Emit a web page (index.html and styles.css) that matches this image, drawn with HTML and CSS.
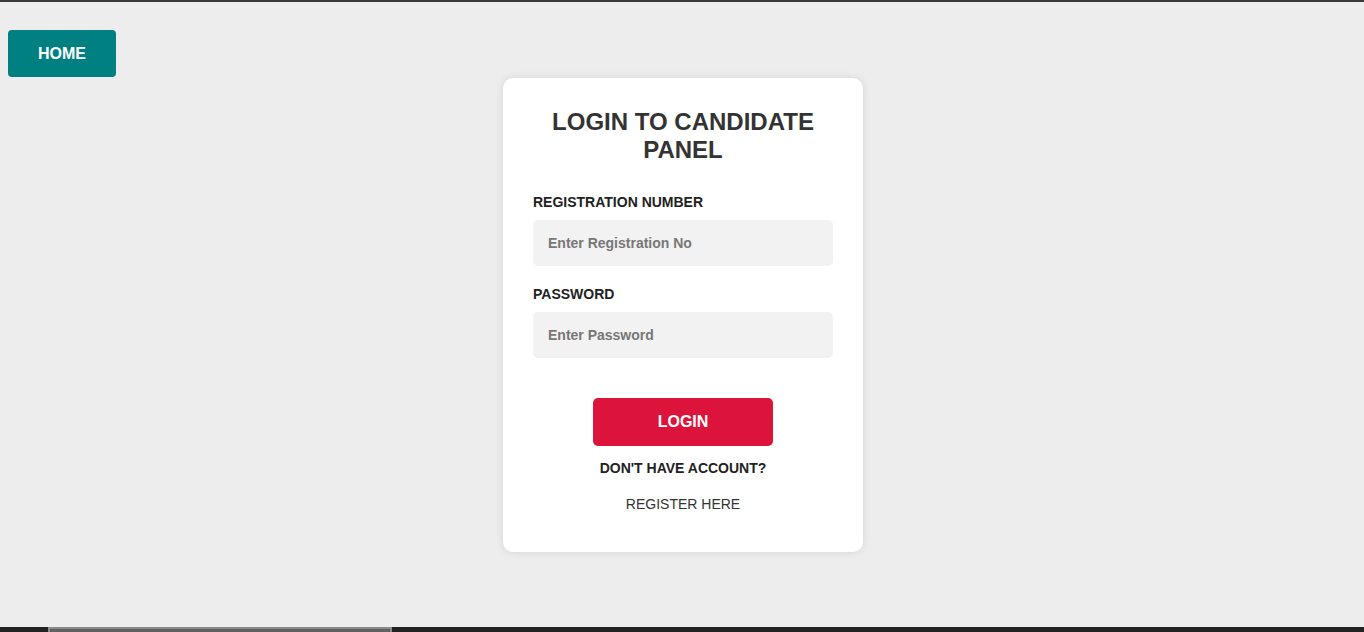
FILE: index.html
```html
<!DOCTYPE html>
<html lang="en">
<head>
<meta charset="utf-8">
<title>Login to Candidate Panel</title>
<link rel="stylesheet" href="styles.css">
</head>
<body>
<header class="topbar">
  <a class="home-btn" href="#">HOME</a>
</header>
<main class="wrap">
  <form class="card">
    <h2 class="title">LOGIN TO CANDIDATE PANEL</h2>
    <label class="label" for="reg">REGISTRATION NUMBER</label>
    <input class="field" id="reg" type="text" placeholder="Enter Registration No">
    <label class="label label-gap" for="pwd">PASSWORD</label>
    <input class="field" id="pwd" type="password" placeholder="Enter Password">
    <button class="login-btn" type="button">LOGIN</button>
    <p class="no-account">DON'T HAVE ACCOUNT?</p>
    <a class="register" href="#">REGISTER HERE</a>
  </form>
</main>
<div class="hscroll"><div class="hscroll-thumb"></div></div>
</body>
</html>
```
FILE: styles.css
```css
* { box-sizing: border-box; }
html, body { height: 100%; }
body {
  margin: 0;
  background: #ededed;
  border-top: 2px solid #3a3a3a;
  font-family: "Liberation Sans", Arial, sans-serif;
  overflow: hidden;
}
.topbar {
  padding: 28px 0 0 8px;
}
.home-btn {
  display: flex;
  align-items: center;
  justify-content: center;
  width: 108px;
  height: 47px;
  background: #008080;
  color: #fff;
  font-weight: bold;
  font-size: 16px;
  text-decoration: none;
  border-radius: 4px;
}
.wrap {
  display: flex;
  justify-content: center;
  padding: 1px 0 0 2px;
}
.card {
  width: 360px;
  background: #fff;
  border-radius: 10px;
  box-shadow: 0 0 8px rgba(0,0,0,0.1);
  padding: 30px 30px 40px;
  display: flex;
  flex-direction: column;
}
.title {
  margin: 0 0 30px;
  font-size: 24px;
  line-height: 28px;
  text-align: center;
  color: #333;
  font-weight: bold;
}
.label {
  font-size: 14px;
  line-height: 16px;
  font-weight: bold;
  color: #222;
  margin-bottom: 10px;
}
.label-gap { margin-top: 20px; }
.field {
  width: 300px;
  height: 46px;
  border: none;
  border-radius: 5px;
  background: #f2f2f2;
  padding: 0 15px;
  font-family: inherit;
  font-size: 14px;
  font-weight: bold;
  color: #333;
  outline: none;
}
.field::placeholder { color: #777; opacity: 1; }
.login-btn {
  align-self: center;
  margin-top: 40px;
  width: 180px;
  height: 48px;
  border: none;
  border-radius: 5px;
  background: #dc143c;
  color: #fff;
  font-family: inherit;
  font-size: 16px;
  font-weight: bold;
}
.no-account {
  margin: 14px 0 0;
  text-align: center;
  font-size: 14px;
  line-height: 16px;
  font-weight: bold;
  color: #222;
}
.register {
  margin-top: 20px;
  text-align: center;
  font-size: 14px;
  line-height: 16px;
  color: #333;
  text-decoration: none;
}
.hscroll {
  position: fixed;
  left: 0;
  right: 0;
  bottom: 0;
  height: 5px;
  background: #232323;
}
.hscroll-thumb {
  position: absolute;
  left: 48px;
  width: 344px;
  top: 0;
  bottom: 0;
  background: #606060;
  border: 2px solid #8a8a8a;
  border-bottom: none;
}
```
